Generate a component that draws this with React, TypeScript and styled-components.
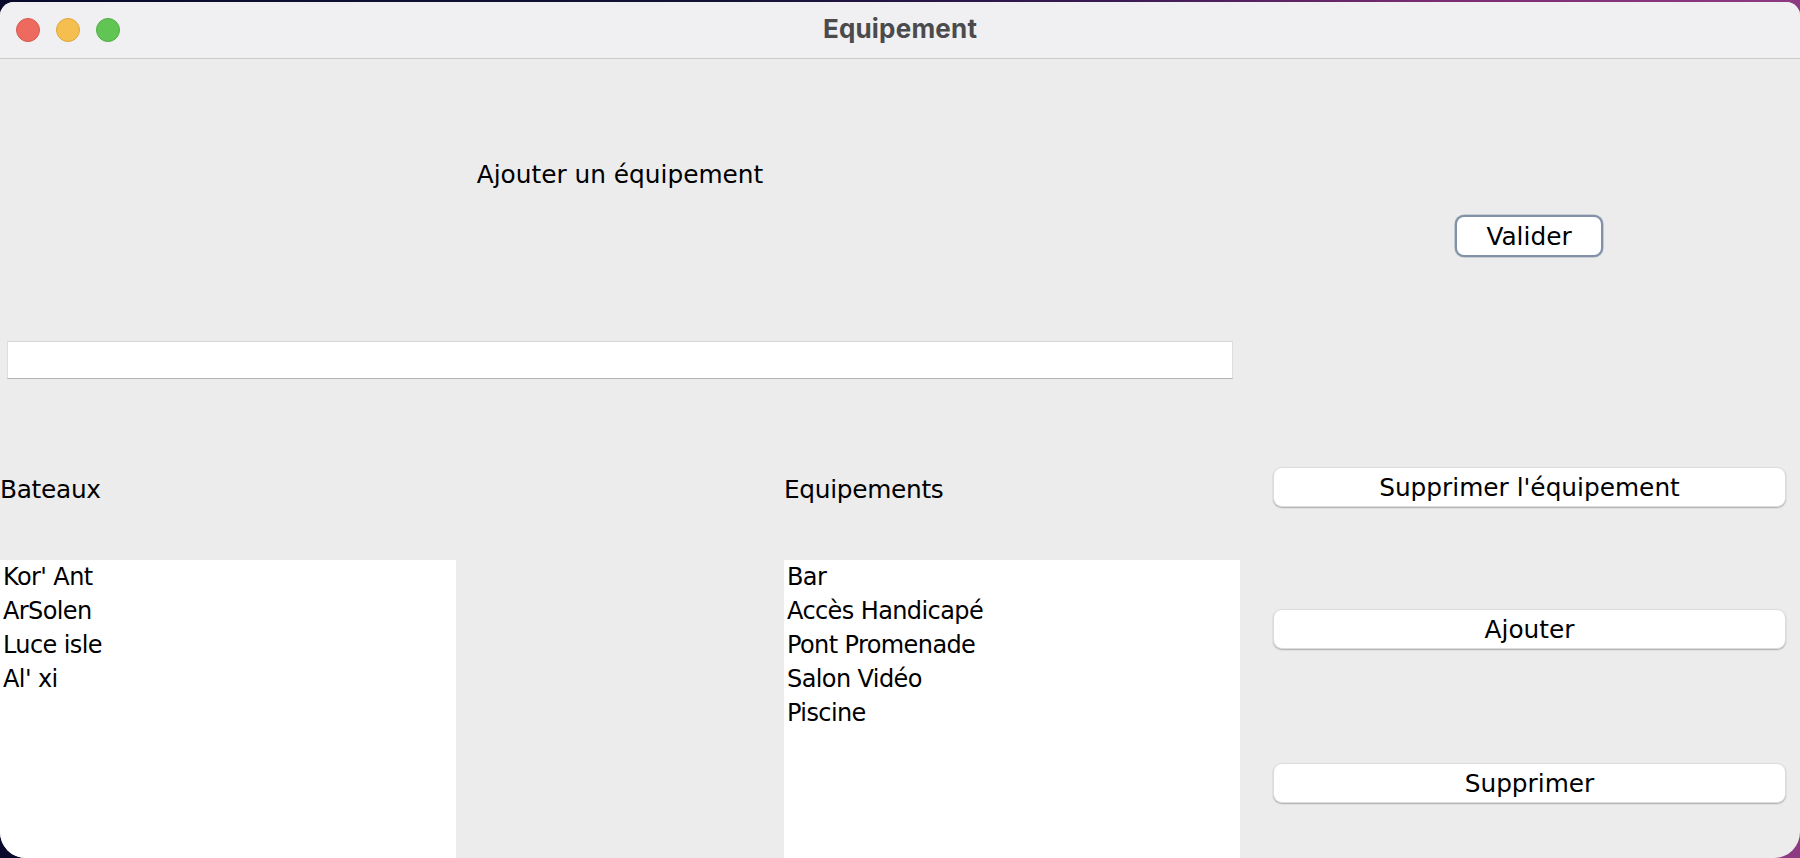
import React from "react";
import styled, { createGlobalStyle } from "styled-components";

const GlobalStyle = createGlobalStyle`
  html, body {
    margin: 0;
    padding: 0;
    width: 1800px;
    height: 858px;
    overflow: hidden;
    background: linear-gradient(90deg, #0a0b2c 0%, #131236 40%, #3a1a55 62%, #7c2c74 80%, #8e3a82 100%);
  }
  #root {
    padding-top: 2px;
  }
  * { box-sizing: border-box; }
`;

const Window = styled.div`
  width: 1800px;
  height: 856px;
  border-radius: 14px 14px 26px 26px;
  overflow: hidden;
  background: #ececec;
  display: flex;
  flex-direction: column;
  font-family: "DejaVu Sans", "Liberation Sans", sans-serif;
  color: #000;
`;

const TitleBar = styled.div`
  height: 57px;
  flex: 0 0 57px;
  background: #f0f0f2;
  border-bottom: 1px solid #c9c9cb;
  display: grid;
  grid-template-columns: 1fr auto 1fr;
  align-items: center;
  padding: 0 16px;
`;

const Lights = styled.div`
  display: flex;
  gap: 16px;
  align-items: center;
`;

const Light = styled.span<{ $fill: string; $edge: string }>`
  width: 24px;
  height: 24px;
  border-radius: 50%;
  background: ${(p) => p.$fill};
  border: 1px solid ${(p) => p.$edge};
`;

const Title = styled.div`
  font-family: Inter, "Liberation Sans", sans-serif;
  font-weight: 700;
  font-size: 26px;
  color: #4b4b4d;
  letter-spacing: 0.2px;
  margin-bottom: 4px;
`;

const Body = styled.div`
  flex: 1;
  display: flex;
  min-height: 0;
`;

const LeftPane = styled.div`
  width: 1240px;
  display: flex;
  flex-direction: column;
`;

const Heading = styled.div`
  margin-top: 101px;
  text-align: center;
  font-size: 24.8px;
  line-height: 29px;
`;

const TextField = styled.div`
  margin: 152px 7px 0;
  height: 38px;
  background: #fff;
  border-top: 1px solid #d6d6d6;
  border-left: 1px solid #dedede;
  border-right: 1px solid #dedede;
  border-bottom: 1px solid #b3b3b3;
`;

const ListsRow = styled.div`
  margin-top: 96px;
  flex: 1;
  display: flex;
  justify-content: space-between;
  min-height: 0;
`;

const ListColumn = styled.div`
  width: 456px;
  display: flex;
  flex-direction: column;
`;

const Label = styled.div`
  font-size: 24.8px;
  line-height: 29px;
  letter-spacing: -0.3px;
`;

const List = styled.div`
  margin-top: 56px;
  flex: 1;
  background: #fff;
  padding: 1px 3px 0;
`;

const ListItem = styled.div`
  font-size: 24px;
  line-height: 33.9px;
  letter-spacing: -0.6px;
  white-space: nowrap;
`;

const RightPane = styled.div`
  flex: 1;
  display: flex;
  flex-direction: column;
  align-items: flex-start;
`;

const ValidateButton = styled.div`
  margin: 156px 0 0 215px;
  width: 148px;
  height: 42px;
  border: 2px solid #8291a7;
  box-shadow: 0 0 0 0.6px rgba(120, 136, 160, 0.6);
  border-radius: 9px;
  background: #fff;
  display: flex;
  align-items: center;
  justify-content: center;
  font-size: 24.8px;
`;

const ActionButton = styled.div<{ $gap: number }>`
  margin: ${(p) => p.$gap}px 0 0 33px;
  width: 513px;
  height: 40px;
  background: #fff;
  border-radius: 9px;
  border: 1px solid #dcdcdc;
  box-shadow: 0 1px 1.5px rgba(0, 0, 0, 0.28);
  display: flex;
  align-items: center;
  justify-content: center;
  font-size: 24.8px;
`;

const boats = ["Kor' Ant", "ArSolen", "Luce isle", "Al' xi"];
const equipments = ["Bar", "Accès Handicapé", "Pont Promenade", "Salon Vidéo", "Piscine"];

export default function App() {
  return (
    <>
      <GlobalStyle />
      <Window>
        <TitleBar>
          <Lights>
            <Light $fill="#ee6a5f" $edge="#d65a4f" />
            <Light $fill="#f5bf4f" $edge="#dea73c" />
            <Light $fill="#61c554" $edge="#50ad44" />
          </Lights>
          <Title>Equipement</Title>
          <span />
        </TitleBar>
        <Body>
          <LeftPane>
            <Heading>Ajouter un équipement</Heading>
            <TextField />
            <ListsRow>
              <ListColumn>
                <Label>Bateaux</Label>
                <List>
                  {boats.map((b) => (
                    <ListItem key={b}>{b}</ListItem>
                  ))}
                </List>
              </ListColumn>
              <ListColumn>
                <Label>Equipements</Label>
                <List>
                  {equipments.map((e) => (
                    <ListItem key={e}>{e}</ListItem>
                  ))}
                </List>
              </ListColumn>
            </ListsRow>
          </LeftPane>
          <RightPane>
            <ValidateButton>Valider</ValidateButton>
            <ActionButton $gap={210}>Supprimer l'équipement</ActionButton>
            <ActionButton $gap={102}>Ajouter</ActionButton>
            <ActionButton $gap={114}>Supprimer</ActionButton>
          </RightPane>
        </Body>
      </Window>
    </>
  );
}
